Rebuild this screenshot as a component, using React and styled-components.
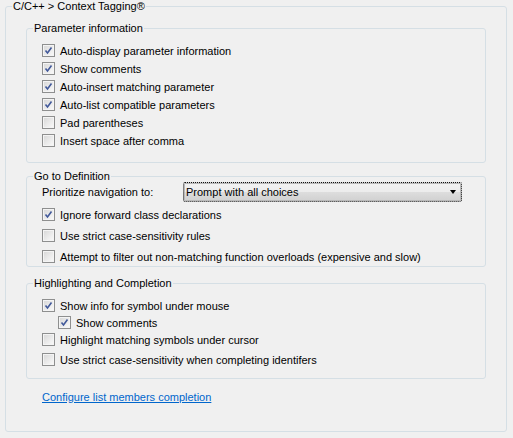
import React from 'react'
import styled, { createGlobalStyle } from 'styled-components'

const GlobalStyle = createGlobalStyle`
  html, body {
    margin: 0;
    background: #f0f0f0;
  }
  body {
    font-family: "Liberation Sans", Arial, sans-serif;
    font-size: 11px;
    color: #000;
  }
`

const Page = styled.div`
  width: 513px;
  height: 438px;
  box-sizing: border-box;
  padding: 0 6px 0 5px;
`

const Group = styled.fieldset`
  margin: ${(p) => p.$mt || 0}px 0 0 0;
  padding: 0;
  min-width: 0;
  border: 1px solid #d5dfe5;
  border-radius: 3px;
  box-sizing: border-box;
  ${(p) => (p.$h ? `height: ${p.$h}px;` : '')}
`

const Caption = styled.legend`
  margin-left: 6px;
  padding: 0 1px;
  line-height: 13px;
  height: 13px;
  color: #000;
`

const GroupBody = styled.div`
  padding: ${(p) => p.$pad};
`

const Row = styled.label`
  display: flex;
  align-items: center;
  gap: 5px;
  height: 17px;
  margin-top: ${(p) => p.$mt || 0}px;
  padding-left: ${(p) => p.$indent || 0}px;
  white-space: nowrap;
`

const Box = styled.span`
  flex: none;
  width: 13px;
  height: 13px;
  box-sizing: border-box;
  border: 1px solid #8e8f8f;
  background: linear-gradient(135deg, #d6d6d6 0%, #e9e9e9 50%, #fbfbfb 100%);
  box-shadow: inset 0 0 0 1px #f4f4f4;

  svg {
    display: block;
  }
`

const SelectRow = styled.div`
  display: flex;
  align-items: center;
  height: 20px;
  margin-top: -1px;
`

const SelectLabel = styled.span`
  width: 141px;
  flex: none;
`

const Select = styled.div`
  width: 279px;
  height: 20px;
  box-sizing: border-box;
  display: flex;
  align-items: center;
  justify-content: space-between;
  padding: 0 5px 0 2px;
  border: 1px dotted #111;
  border-radius: 2px;
  background: linear-gradient(#f3f3f3 0%, #ececec 50%, #dddddd 51%, #d1d1d1 100%);
  box-shadow: inset 0 0 0 1px #b9b9b9;
`

const Arrow = styled.span`
  width: 0;
  height: 0;
  border-left: 3.5px solid transparent;
  border-right: 3.5px solid transparent;
  border-top: 4px solid #000;
`

const LinkText = styled.a`
  display: inline-block;
  margin: 12px 0 0 16px;
  line-height: 13px;
  color: #0066cc;
  text-decoration: underline;
  cursor: pointer;
`

const CheckMark = () => (
  <svg width="11" height="11" viewBox="0 0 11 11">
    <path d="M2.5 5.5 L4.5 8 L8.5 2.5" fill="none" stroke="#42599a" strokeWidth="1.6" />
  </svg>
)

const Check = ({ checked, children, mt, indent }) => (
  <Row $mt={mt} $indent={indent}>
    <Box>{checked && <CheckMark />}</Box>
    <span>{children}</span>
  </Row>
)

const App = () => {
  return (
    <>
      <GlobalStyle />
      <Page>
        <Group $h={432}>
          <Caption>C/C++ &gt; Context Tagging®</Caption>
          <GroupBody $pad="9px 20px 0 20px">
            <Group>
              <Caption>Parameter information</Caption>
              <GroupBody $pad="7px 15px 13px 15px">
                <Check checked>Auto-display parameter information</Check>
                <Check checked mt={1}>Show comments</Check>
                <Check checked mt={1}>Auto-insert matching parameter</Check>
                <Check checked mt={1}>Auto-list compatible parameters</Check>
                <Check mt={1}>Pad parentheses</Check>
                <Check mt={1}>Insert space after comma</Check>
              </GroupBody>
            </Group>

            <Group $mt={7}>
              <Caption>Go to Definition</Caption>
              <GroupBody $pad="0 15px 1px 15px">
                <SelectRow>
                  <SelectLabel>Prioritize navigation to:</SelectLabel>
                  <Select>
                    <span>Prompt with all choices</span>
                    <Arrow />
                  </Select>
                </SelectRow>
                <Check checked mt={4}>Ignore forward class declarations</Check>
                <Check mt={4}>Use strict case-sensitivity rules</Check>
                <Check mt={4}>Attempt to filter out non-matching function overloads (expensive and slow)</Check>
              </GroupBody>
            </Group>

            <Group $mt={10}>
              <Caption>Highlighting and Completion</Caption>
              <GroupBody $pad="7px 15px 10px 15px">
                <Check checked>Show info for symbol under mouse</Check>
                <Check checked indent={16}>Show comments</Check>
                <Check>Highlight matching symbols under cursor</Check>
                <Check mt={3}>Use strict case-sensitivity when completing identifers</Check>
              </GroupBody>
            </Group>

            <LinkText>Configure list members completion</LinkText>
          </GroupBody>
        </Group>
      </Page>
    </>
  )
}

export default App
